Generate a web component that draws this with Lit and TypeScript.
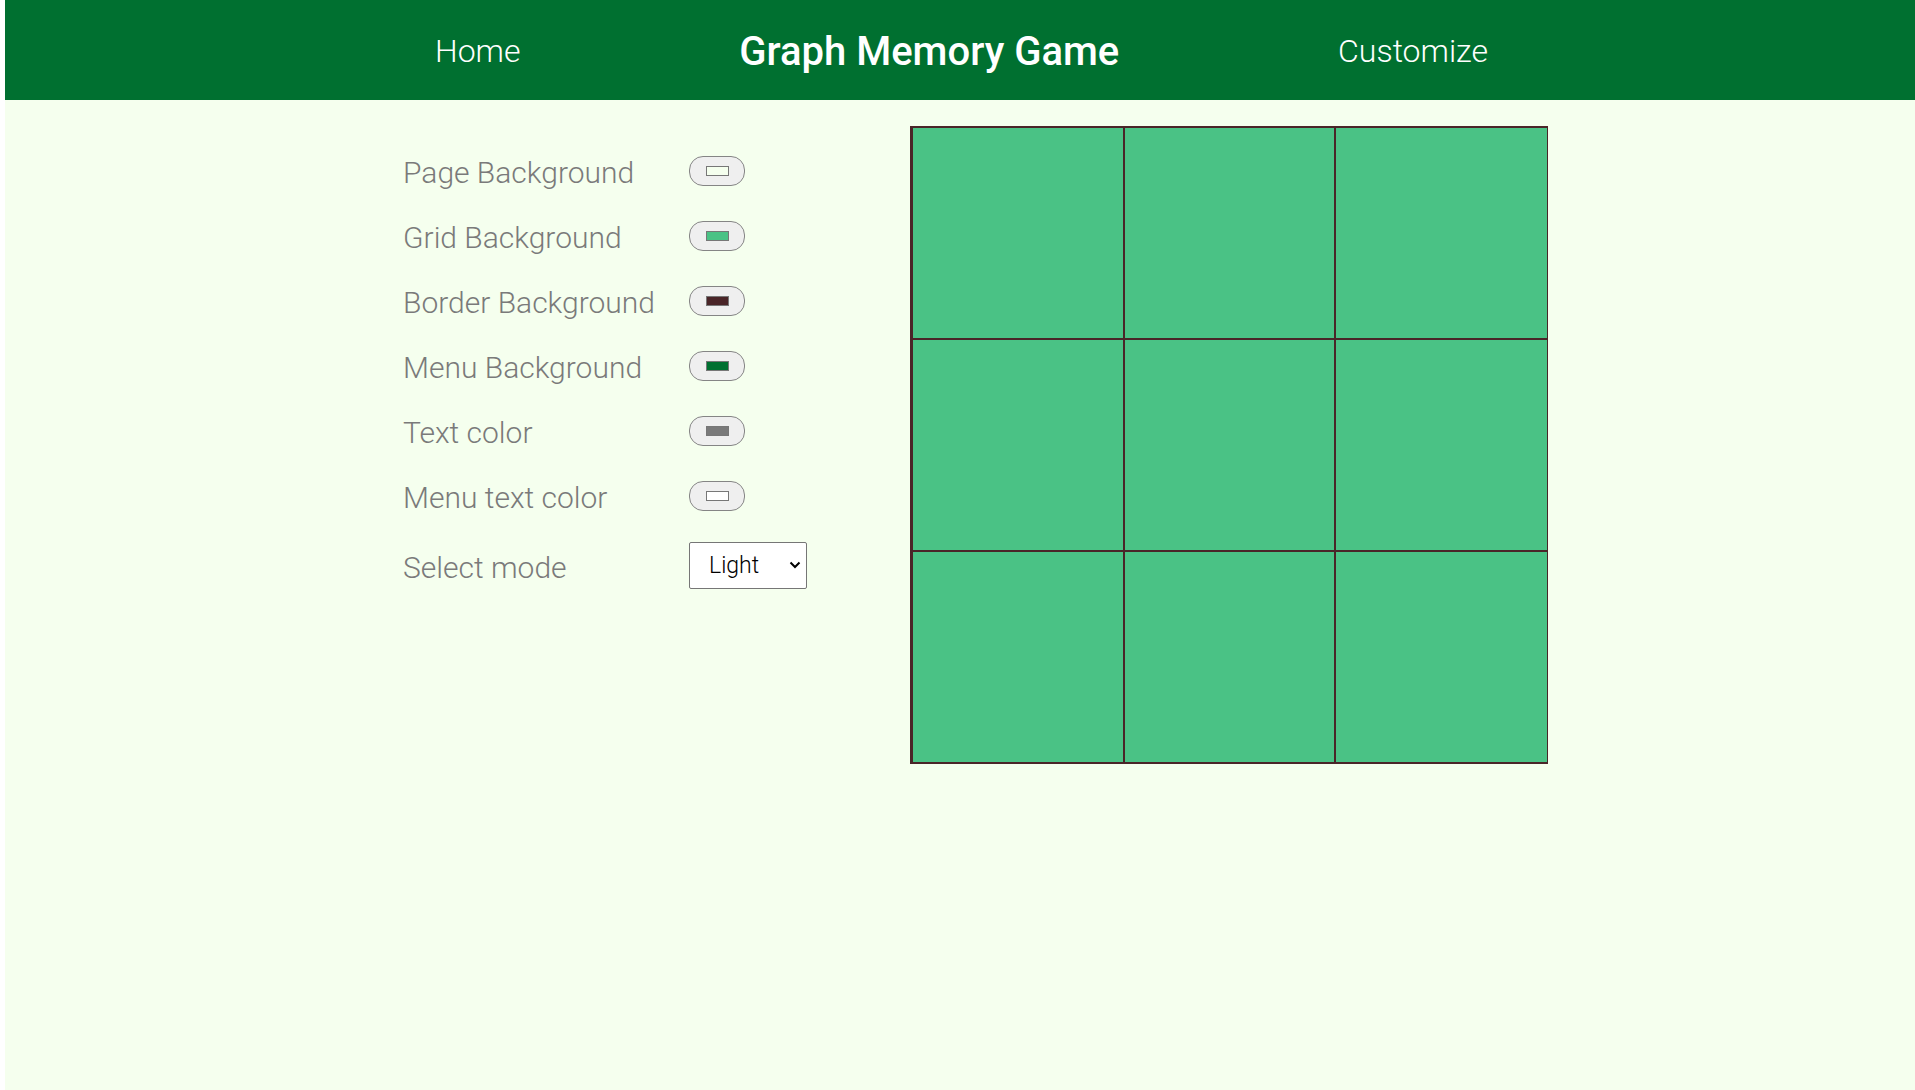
import { LitElement, html, css } from "lit";
import { customElement, state } from "lit/decorators.js";

type ColorKey = "page" | "grid" | "border" | "menu" | "text" | "menuText";

const FIELDS: { key: ColorKey; label: string }[] = [
  { key: "page", label: "Page Background" },
  { key: "grid", label: "Grid Background" },
  { key: "border", label: "Border Background" },
  { key: "menu", label: "Menu Background" },
  { key: "text", label: "Text color" },
  { key: "menuText", label: "Menu text color" },
];

const THEMES: Record<string, Record<ColorKey, string>> = {
  Light: {
    page: "#f5ffee",
    grid: "#4ac285",
    border: "#4a2528",
    menu: "#007030",
    text: "#7a7a7a",
    menuText: "#ffffff",
  },
  Dark: {
    page: "#202622",
    grid: "#2f7d55",
    border: "#0d0d0d",
    menu: "#0b3a1e",
    text: "#d0d0d0",
    menuText: "#ffffff",
  },
};

@customElement("app-root")
export class AppRoot extends LitElement {
  @state() private colors = { ...THEMES.Light };

  static styles = css`
    :host {
      display: block;
      box-sizing: border-box;
      min-height: 100vh;
      padding-left: 5px;
      background: #ffffff;
      font-family: Roboto, "Open Sans", sans-serif;
      font-weight: 300;
    }
    .page {
      min-height: 100vh;
    }
    .menu,
    .content {
      display: grid;
      grid-template-columns: 398fr 1145fr 367fr;
    }
    .links {
      grid-column: 2;
      display: flex;
      align-items: center;
      justify-content: space-between;
      box-sizing: border-box;
      height: 100px;
      padding: 2px 60px 0 32px;
    }
    .link {
      color: inherit;
      font-size: 32px;
      text-decoration: none;
    }
    .title {
      margin: 0;
      font-size: 40px;
      font-weight: 500;
    }
    .columns {
      grid-column: 2;
      display: grid;
      grid-template-columns: 507fr 638fr;
      align-items: start;
      padding-top: 26px;
    }
    .settings {
      padding-top: 12px;
    }
    .row {
      display: grid;
      grid-template-columns: 286px auto;
      align-items: center;
      justify-content: start;
      min-height: 65px;
    }
    .row.mode {
      min-height: 74px;
    }
    .label {
      padding-top: 4px;
      font-size: 30px;
    }
    .color {
      appearance: none;
      box-sizing: border-box;
      width: 56px;
      height: 30px;
      padding: 9px 15px 9px 16px;
      border: 1px solid #858585;
      border-radius: 14px;
      background: #efefef;
    }
    .color::-webkit-color-swatch-wrapper {
      padding: 0;
    }
    .color::-webkit-color-swatch {
      border: 1px solid #777777;
      border-radius: 0;
    }
    .select {
      appearance: none;
      box-sizing: border-box;
      width: 118px;
      height: 47px;
      padding: 0 24px 0 19px;
      border: 1px solid #767676;
      border-radius: 2px;
      background: #ffffff
        url("data:image/svg+xml,%3Csvg xmlns='http://www.w3.org/2000/svg' width='12' height='8'%3E%3Cpath d='M1.5 1.5 6 6l4.500-4.500' fill='none' stroke='%23000' stroke-width='2'/%3E%3C/svg%3E")
        no-repeat right 5px center;
      color: #000000;
      font: 300 23px Roboto, "Open Sans", sans-serif;
    }
    .board {
      display: grid;
      grid-template: repeat(3, 1fr) / repeat(3, 1fr);
      box-sizing: border-box;
      aspect-ratio: 1;
      border: 0 solid var(--line);
      border-width: 2px 0 0 3px;
    }
    .cell {
      border: 0 solid var(--line);
      border-width: 0 2px 2px 0;
      background: var(--fill);
    }
    .cell:nth-child(3n) {
      border-right-width: 1px;
    }
  `;

  private setColor(key: ColorKey, e: Event) {
    this.colors = { ...this.colors, [key]: (e.target as HTMLInputElement).value };
  }

  private setMode(e: Event) {
    this.colors = { ...THEMES[(e.target as HTMLSelectElement).value] };
  }

  render() {
    const c = this.colors;
    return html`
      <div class="page" style="background:${c.page};color:${c.text}">
        <header class="menu" style="background:${c.menu};color:${c.menuText}">
          <nav class="links">
            <a class="link" href="#home">Home</a>
            <h1 class="title">Graph Memory Game</h1>
            <a class="link" href="#customize">Customize</a>
          </nav>
        </header>
        <main class="content">
          <div class="columns">
            <form class="settings">
              ${FIELDS.map(
                (f) => html`
                  <div class="row">
                    <label class="label" for=${f.key}>${f.label}</label>
                    <input
                      class="color"
                      type="color"
                      id=${f.key}
                      .value=${c[f.key]}
                      @input=${(e: Event) => this.setColor(f.key, e)}
                    />
                  </div>
                `
              )}
              <div class="row mode">
                <label class="label" for="mode">Select mode</label>
                <select class="select" id="mode" @change=${this.setMode}>
                  ${Object.keys(THEMES).map((m) => html`<option value=${m}>${m}</option>`)}
                </select>
              </div>
            </form>
            <div class="board" style="--line:${c.border};--fill:${c.grid}">
              ${Array.from({ length: 9 }, () => html`<div class="cell"></div>`)}
            </div>
          </div>
        </main>
      </div>
    `;
  }
}
